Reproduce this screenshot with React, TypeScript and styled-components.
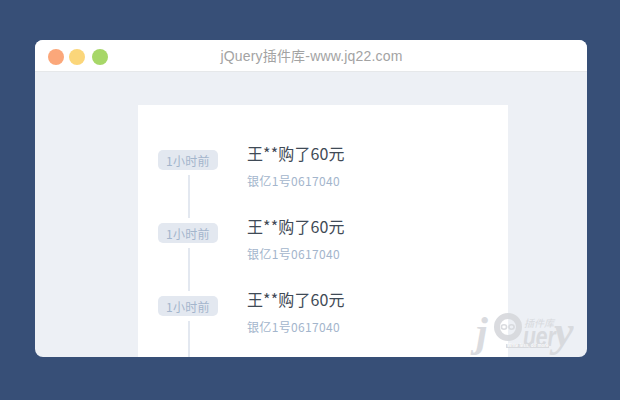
import React from "react";
import styled, { createGlobalStyle } from "styled-components";

const Global = createGlobalStyle`
  html, body { margin: 0; padding: 0; background: #374f77; }
  body { font-family: "Noto Sans CJK SC", sans-serif; }
`;

const Page = styled.div`
  box-sizing: border-box;
  width: 620px;
  height: 400px;
  padding: 40px 33px 43px 35px;
  background: #374f77;
  position: relative;
  overflow: hidden;
`;

const Browser = styled.div`
  height: 317px;
  border-radius: 8px;
  overflow: hidden;
  background: #edf0f5;
  display: flex;
  flex-direction: column;
`;

const TitleBar = styled.div`
  box-sizing: border-box;
  flex: none;
  height: 32px;
  background: #fff;
  border-bottom: 1px solid #e6e8ea;
  padding: 9px 0 0 13px;
  display: flex;
  align-items: flex-start;
  position: relative;
`;

const Dot = styled.span<{ $color: string; $gap: number }>`
  width: 16px;
  height: 16px;
  border-radius: 50%;
  background: ${(p) => p.$color};
  margin-right: ${(p) => p.$gap}px;
  flex: none;
`;

const Title = styled.div`
  position: absolute;
  left: 1px;
  right: 0;
  top: 0;
  line-height: 33px;
  text-align: center;
  font-family: "Liberation Sans", "Noto Sans CJK SC", sans-serif;
  font-size: 14px;
  letter-spacing: 0.18px;
  color: #a3a3a3;
`;

const Body = styled.div`
  flex: 1;
  min-height: 0;
  padding: 33px 79px 0 103px;
`;

const Card = styled.div`
  height: 100%;
  background: #fff;
  padding: 31px 20px 0;
  box-sizing: border-box;
  overflow: hidden;
  display: flex;
  flex-direction: column;
`;

const Row = styled.div`
  flex: none;
  height: 73px;
  display: flex;
  align-items: flex-start;
`;

const Time = styled.div`
  flex: none;
  width: 60px;
  margin-right: 29px;
  display: flex;
  flex-direction: column;
  align-items: center;
  padding-top: 14px;
`;

const Badge = styled.div`
  width: 60px;
  height: 20px;
  border-radius: 5px;
  background: #e3e8f0;
  color: #a3b5cc;
  font-size: 12px;
  letter-spacing: 0.3px;
  line-height: 21px;
  text-align: center;
`;

const Line = styled.div`
  width: 2px;
  height: 43px;
  margin: 5px 0 0 2px;
  background: #e3e8f0;
`;

const Info = styled.div`
  display: flex;
  flex-direction: column;
`;

const Name = styled.div`
  font-size: 16px;
  letter-spacing: 0.12px;
  line-height: 24px;
  margin-top: 5px;
  color: #3f4a56;
`;

const Sub = styled.div`
  font-size: 12px;
  letter-spacing: 0.34px;
  line-height: 18px;
  margin-top: 7px;
  color: #a3b5cc;
`;

const Mark = styled.div`
  position: absolute;
  left: 470px;
  top: 312px;
  width: 108px;
  height: 42px;
  opacity: 0.9;
  pointer-events: none;
`;

const MarkWord = styled.span<{ $x: number; $y: number; $size: number }>`
  position: absolute;
  left: ${(p) => p.$x}px;
  top: ${(p) => p.$y}px;
  font-family: "Liberation Sans", sans-serif;
  font-style: italic;
  font-weight: 700;
  font-size: ${(p) => p.$size}px;
  line-height: 12px;
  color: #d6d8dc;
  transform-origin: left top;
  transform: scaleX(0.78);
`;

const MarkScript = styled(MarkWord)`
  font-family: "Liberation Serif", serif;
  line-height: 1;
  transform: none;
`;

const MarkCn = styled.span`
  position: absolute;
  left: 54px;
  top: 6px;
  font-size: 10px;
  line-height: 1;
  font-style: italic;
  color: #d6d8dc;
`;

const MarkTag = styled.span`
  position: absolute;
  left: 36px;
  top: 32px;
  padding: 0 1px;
  background: #d6d8dc;
  font-family: "Liberation Sans", sans-serif;
  font-size: 4.5px;
  font-weight: 700;
  line-height: 4px;
  white-space: nowrap;
  color: #fff;
`;

const MarkFace = styled.svg`
  position: absolute;
  left: 23px;
  top: 0;
`;

const items = [0, 1, 2];

export default function App() {
  return (
    <>
      <Global />
      <Page>
        <Browser>
          <TitleBar>
            <Dot $color="#fba77a" $gap={5} />
            <Dot $color="#fbd67a" $gap={7} />
            <Dot $color="#a7d768" $gap={0} />
            <Title>jQuery插件库-www.jq22.com</Title>
          </TitleBar>
          <Body>
            <Card>
              {items.map((i) => (
                <Row key={i}>
                  <Time>
                    <Badge>1小时前</Badge>
                    <Line />
                  </Time>
                  <Info>
                    <Name>王**购了60元</Name>
                    <Sub>银亿1号0617040</Sub>
                  </Info>
                </Row>
              ))}
            </Card>
          </Body>
        </Browser>
        <Mark>
          <MarkScript $x={6} $y={-1} $size={42}>j</MarkScript>
          <MarkFace width="30" height="30" viewBox="0 0 30 30">
            <circle cx="15" cy="15" r="11" fill="none" stroke="#d6d8dc" strokeWidth="6" />
            <ellipse cx="11" cy="15" rx="2.6" ry="2.2" fill="none" stroke="#d6d8dc" strokeWidth="1.6" />
            <ellipse cx="18.5" cy="15" rx="2.6" ry="2.2" fill="none" stroke="#d6d8dc" strokeWidth="1.6" />
          </MarkFace>
          <MarkCn>插件库</MarkCn>
          <MarkWord $x={53} $y={19} $size={27}>uer</MarkWord>
          <MarkScript $x={84} $y={-2} $size={44}>y</MarkScript>
          <MarkTag>Write less, do more</MarkTag>
        </Mark>
      </Page>
    </>
  );
}
